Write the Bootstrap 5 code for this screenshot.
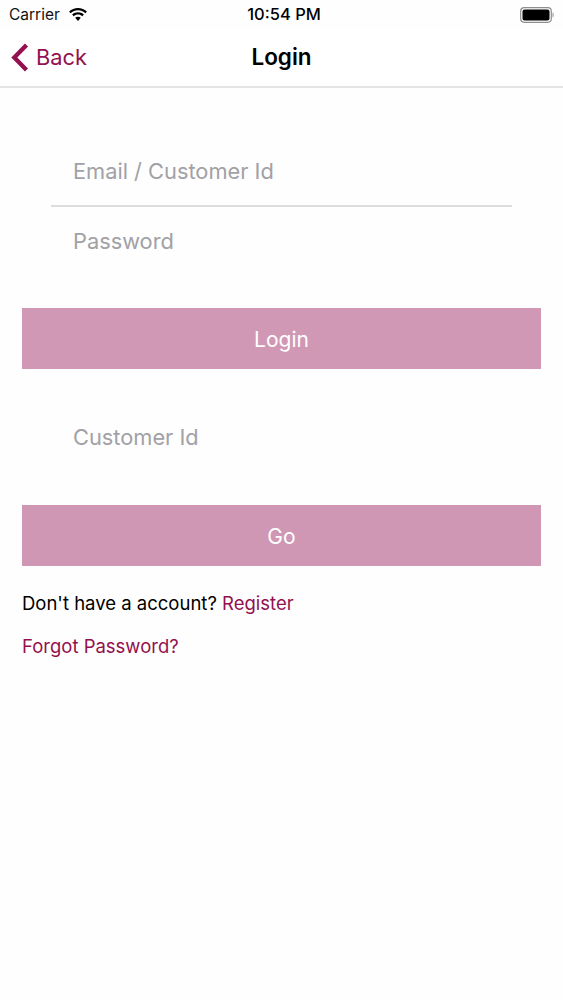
<!DOCTYPE html>
<html lang="en">
<head>
<meta charset="utf-8">
<title>Login</title>
<link rel="stylesheet" href="https://cdn.jsdelivr.net/npm/bootstrap@5.3.0/dist/css/bootstrap.min.css">
<style>
html, body { background: #fefefe; }
body { font-family: Inter, "Liberation Sans", sans-serif; color: #000; height: 1000px; overflow: hidden; }
.status-strip { height: 29px; margin-bottom: 1px; padding: 0 9px; font-size: 15.5px; line-height: 29px; }
.status-side { flex: 1 1 0; }
.status-time { font-weight: 500; font-size: 16.5px; margin-left: 5px; }
.carrier { color: #111; }
.top-nav { height: 58px; border-bottom: 2px solid #e4e4e4; background: #fff; }
.back-link { left: 11px; top: 0; height: 54px; color: #93114e; font-size: 21.8px; text-decoration: none; gap: 7px; }
.nav-title { font-size: 22.5px; font-weight: 600; line-height: 54px; }
.field-box { margin: 0 51px; }
.field-input.form-control { border: 0; border-radius: 0; background: transparent; box-shadow: none; height: 68px; padding: 0 0 0 22px; font-size: 21.8px; font-family: inherit; }
.field-input.form-control::placeholder { color: #a1a1a6; opacity: 1; }
.field-first { height: 68px; margin-top: 49px; border-bottom: 2px solid #dcdcdc; box-sizing: content-box; }
.action-btn.btn { display: block; width: 519px; height: 61px; margin: 0 0 0 22px; border: 0; border-radius: 0; background: #d198b6; color: #fff; font-size: 21px; font-family: inherit; padding: 2px 0 0; }
.action-go.btn { background: #cf97b3; }
.action-login.btn { margin-top: 33px; }
.help-line { margin: 0 0 0 22px; font-size: 18.5px; line-height: 26px; }
.rose-link { color: #93114e; text-decoration: none; }
.login-cust { margin-top: 34px; margin-bottom: 34px; }
.action-go + .help-line { margin-top: 24px; margin-bottom: 17px; }
</style>
</head>
<body>
<div class="status-strip d-flex align-items-center">
  <div class="status-side d-flex align-items-center gap-2">
    <span class="carrier">Carrier</span>
    <svg width="20" height="14" viewBox="0 0 20 14" aria-hidden="true"><path fill="#000" d="M10 2.200c2.800 0 5.400 1.100 7.400 3l1.500-1.600C16.500 1.300 13.400 0 10 0S3.500 1.300 1.100 3.600l1.500 1.600c2-1.900 4.600-3 7.400-3zm0 4.300c1.600 0 3.100.6 4.300 1.700l1.600-1.600C14.300 5.100 12.200 4.300 10 4.300s-4.300.8-5.900 2.300l1.600 1.600C6.900 7.100 8.400 6.500 10 6.500zm0 2.200c-1.100 0-2 .4-2.800 1.100L10 13l2.800-3.200C12 9.100 11.100 8.700 10 8.700z"/></svg>
  </div>
  <div class="status-time">10:54 PM</div>
  <div class="status-side d-flex justify-content-end">
    <svg width="34" height="16" viewBox="0 0 34 16" aria-hidden="true"><rect x=".7" y=".7" width="30.600" height="14.600" rx="3.500" fill="none" stroke="#8f8f8f" stroke-width="1.200"/><rect x="2.500" y="2.500" width="27" height="11" rx="2" fill="#000"/><path d="M32.500 5.500c1 .3 1.200 1.200 1.200 2.500s-.2 2.200-1.200 2.500z" fill="#9a9a9a"/></svg>
  </div>
</div>
<nav class="top-nav position-relative text-center">
  <a class="back-link position-absolute d-flex align-items-center" href="#">
    <svg width="18" height="29" viewBox="0 0 18 29" aria-hidden="true"><path d="M15.500 2 3.300 14.500 15.500 27" fill="none" stroke="#93114e" stroke-width="4.300"/></svg>
    <span>Back</span>
  </a>
  <div class="nav-title">Login</div>
</nav>
<form>
  <div class="field-box field-first"><input class="form-control field-input" type="text" placeholder="Email / Customer Id"></div>
  <div class="field-box"><input class="form-control field-input" type="password" placeholder="Password"></div>
  <button type="button" class="btn action-btn action-login">Login</button>
  <div class="field-box login-cust"><input class="form-control field-input" type="text" placeholder="Customer Id"></div>
  <button type="button" class="btn action-btn action-go">Go</button>
  <p class="help-line">Don't have a account? <a class="rose-link" href="#">Register</a></p>
  <p class="help-line"><a class="rose-link" href="#">Forgot Password?</a></p>
</form>
</body>
</html>
